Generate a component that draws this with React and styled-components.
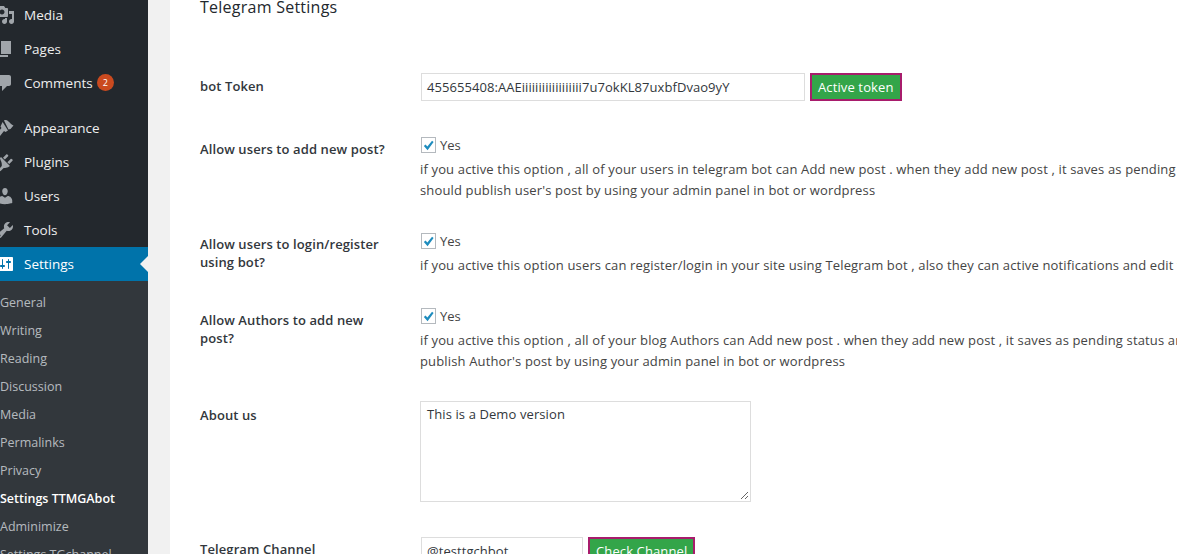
import styled, { createGlobalStyle } from 'styled-components';

const GlobalStyle = createGlobalStyle`
  html, body {
    margin: 0;
    padding: 0;
    height: 554px;
    overflow: hidden;
    background: #fff;
  }
  body {
    font-family: "Open Sans", "Noto Sans", sans-serif;
    font-size: 13px;
    color: #444;
  }
`;

const Page = styled.div`
  display: flex;
  width: 1177px;
  height: 554px;
  overflow: hidden;
`;

const Sidebar = styled.nav`
  width: 148px;
  flex-shrink: 0;
  background: #23282d;
  display: flex;
  flex-direction: column;
`;

const MenuGroup = styled.div`
  display: flex;
  flex-direction: column;
  margin-top: ${p => p.$offset || 0}px;
  margin-bottom: ${p => p.$gap || 0}px;
`;

const MenuItem = styled.div`
  position: relative;
  box-sizing: border-box;
  display: flex;
  align-items: center;
  height: 34px;
  padding-bottom: 1px;
  gap: 9px;
  color: ${p => (p.$active ? '#fff' : '#eee')};
  background: ${p => (p.$active ? '#0073aa' : 'transparent')};
  font-size: 13.5px;
`;

const IconSlot = styled.svg`
  width: 20px;
  height: 20px;
  margin-left: -5px;
  fill: ${p => (p.$active ? '#fff' : '#a0a5aa')};
  flex-shrink: 0;
`;

const Arrow = styled.span`
  position: absolute;
  right: 0;
  top: 9px;
  border: 8px solid transparent;
  border-right-color: #f1f1f1;
  border-left-width: 0;
`;

const Badge = styled.span`
  display: inline-flex;
  align-items: center;
  justify-content: center;
  width: 17px;
  height: 17px;
  margin-left: -5px;
  border-radius: 50%;
  background: #ca4a1f;
  color: #fff;
  font-size: 9px;
`;

const Submenu = styled.div`
  background: #32373c;
  flex: 1;
  padding-top: 8px;
  display: flex;
  flex-direction: column;
`;

const SubItem = styled.div`
  height: 28px;
  line-height: 28px;
  font-size: 12.5px;
  white-space: nowrap;
  color: ${p => (p.$current ? '#fff' : 'rgba(240,245,250,.7)')};
  font-weight: ${p => (p.$current ? 600 : 400)};
`;

const Content = styled.main`
  flex: 1;
  min-width: 0;
  display: flex;
  background: #f1f1f1;
  padding-left: 22px;
`;

const Card = styled.section`
  flex: 1;
  min-width: 0;
  background: #fff;
  padding: 0 0 0 30px;
  overflow: hidden;
`;

const Heading = styled.h2`
  margin: -6px 0 29px;
  height: 50px;
  font-size: 16px;
  line-height: 26px;
  font-weight: 500;
  letter-spacing: .25px;
  color: #23282d;
`;

const Row = styled.div`
  display: grid;
  grid-template-columns: 220px max-content;
  min-height: ${p => p.$height}px;
  align-items: start;
`;

const Label = styled.label`
  font-size: 13px;
  line-height: 18px;
  font-weight: 600;
  letter-spacing: .1px;
  color: #32373c;
  width: 190px;
  padding-top: ${p => p.$top || 0}px;
`;

const Field = styled.div`
  display: flex;
  flex-direction: column;
`;

const InlineField = styled.div`
  display: flex;
  align-items: stretch;
  gap: 5px;
  margin-left: 1px;
`;

const TextBox = styled.div`
  box-sizing: border-box;
  width: ${p => p.$width}px;
  height: 28px;
  padding: 0 5px;
  border: 1px solid #ddd;
  background: #fff;
  color: #32373c;
  line-height: 26px;
  letter-spacing: .06px;
  white-space: nowrap;
  overflow: hidden;
`;

const GreenButton = styled.button`
  box-sizing: border-box;
  height: 28px;
  padding: 0 6px;
  border: 2px solid #a81c6c;
  background: #33a549;
  color: #fff;
  font: inherit;
  letter-spacing: .12px;
  line-height: 22px;
  white-space: nowrap;
`;

const CheckRow = styled.div`
  display: flex;
  align-items: center;
  gap: 4px;
  height: 22px;
  line-height: 18px;
`;

const CheckBox = styled.span`
  box-sizing: border-box;
  display: flex;
  align-items: center;
  justify-content: center;
  width: 15px;
  height: 16px;
  margin-left: 1px;
  border: 1px solid #b4b9be;
  background: #fff;
`;

const Hint = styled.p`
  margin: 3px 0 0;
  font-size: 13px;
  line-height: 21px;
  letter-spacing: .15px;
  color: #444;
  white-space: nowrap;
`;

const TextArea = styled.div`
  position: relative;
  box-sizing: border-box;
  width: 331px;
  height: 101px;
  padding: 2px 6px;
  border: 1px solid #ddd;
  background: #fff;
  color: #32373c;
  letter-spacing: .1px;
  line-height: 20px;
`;

const Grip = styled.svg`
  position: absolute;
  right: 1px;
  bottom: 1px;
  width: 9px;
  height: 9px;
  stroke: #666;
  stroke-width: 1;
`;

const icons = {
  media: 'M13 11V4c0-.55-.45-1-1-1h-1.670L9 1H5L3.670 3H2c-.55 0-1 .45-1 1v7c0 .55.45 1 1 1h10c.55 0 1-.45 1-1zM7 4.500c1.380 0 2.500 1.120 2.500 2.500S8.380 9.500 7 9.500 4.500 8.380 4.500 7 5.620 4.500 7 4.500zM14 6h5v10.500c0 1.380-1.120 2.500-2.500 2.500S14 17.880 14 16.500s1.120-2.500 2.500-2.500c.17 0 .34.020.5.050V9h-3V6zm-4 8.050V13h2v3.500c0 1.380-1.120 2.500-2.500 2.500S7 17.880 7 16.500 8.120 14 9.500 14c.17 0 .34.020.5.050z',
  pages: 'M6 15V2h10v13H6zm-1 1h8v2H3V5h2v11z',
  comments: 'M5 2h9c1.100 0 2 .9 2 2v7c0 1.100-.9 2-2 2h-2l-5 5v-5H5c-1.100 0-2-.9-2-2V4c0-1.100.9-2 2-2z',
  appearance: 'M9 2.500c1.500-.8 3-.3 4.500 1 1.500 1.200 3 3.200 5 4l-3 3.500-2 .5zM7.600 4l5.400 8.500-2.500 1.500-1.500-1-4.500 5.500c-.8.8-2 .8-2.700 0-.8-.8-.8-1.900 0-2.700L6.500 10l-1-1.500z',
  plugins: 'M13.110 4.360L9.870 7.600 8 5.730l3.240-3.240c.35-.34 1.050-.2 1.560.32.520.51.660 1.210.310 1.550zM17.500 8.800l-3.240 3.240-1.870-1.870 3.240-3.240c.35-.34 1.050-.2 1.560.32.520.51.660 1.210.310 1.550zM6 5l9 9-1.200.84c-.7.7-2.600 1.160-3.700 1.160H8.700l-2.800 2.800c-.5.5-1.500.6-2 .1-.5-.5-.4-1.500.1-2l2.800-2.800v-1.800c0-1-.4-2.500-1-3.500L4.900 6.100z',
  users: 'M10 9.250c-2.270 0-2.730-3.440-2.730-3.440C7 4.020 7.820 2 9.970 2c2.160 0 2.980 2.020 2.710 3.810 0 0-.41 3.440-2.680 3.440zm0 2.570L12.720 10c2.390 0 4.520 2.330 4.520 4.530v2.490s-3.650 1.130-7.240 1.130c-3.650 0-7.240-1.130-7.240-1.130v-2.490c0-2.250 1.940-4.480 4.470-4.480z',
  tools: 'M16.680 9.770c-1.340 1.340-3.300 1.670-4.950.99l-5.410 6.520c-.99.99-2.590.99-3.580 0s-.99-2.590 0-3.570l6.520-5.420c-.68-1.650-.35-3.610.99-4.950 1.280-1.280 3.120-1.620 4.720-1.060l-2.890 2.890 2.820 2.820 2.860-2.870c.53 1.580.18 3.420-1.080 4.650zM3.810 16.210c.4.390 1.040.39 1.430 0 .4-.4.4-1.040 0-1.430-.39-.4-1.030-.4-1.430 0-.39.39-.39 1.030 0 1.430z',
  settings: 'M18 16V4c0-.55-.45-1-1-1H3c-.55 0-1 .45-1 1v12c0 .55.45 1 1 1h14c.55 0 1-.45 1-1zM8 11h1c.55 0 1 .45 1 1s-.45 1-1 1H8v1.500c0 .28-.22.5-.5.5s-.5-.22-.5-.5V13H6c-.55 0-1-.45-1-1s.45-1 1-1h1V5.500c0-.28.22-.5.5-.5s.5.22.5.5V11zm5-2h-1c-.55 0-1-.45-1-1s.45-1 1-1h1V5.500c0-.28.22-.5.5-.5s.5.22.5.5V7h1c.55 0 1 .45 1 1s-.45 1-1 1h-1v5.500c0 .28-.22.5-.5.5s-.5-.22-.5-.5V9z',
};

const Icon = ({ name, active }) => (
  <IconSlot viewBox="0 0 20 20" $active={active}>
    <path fillRule="evenodd" d={icons[name]} />
  </IconSlot>
);

const Check = () => (
  <svg width="13" height="13" viewBox="0 0 14 14">
    <path d="M2 7.500l1.800-1.700 2 2.200L10.800 2 12.500 3.300 6 12z" fill="#1e8cbe" />
  </svg>
);

const subItems = ['General', 'Writing', 'Reading', 'Discussion', 'Media', 'Permalinks', 'Privacy', 'Settings TTMGAbot', 'Adminimize', 'Settings TGchannel'];

const Yes = () => (
  <CheckRow>
    <CheckBox><Check /></CheckBox>
    Yes
  </CheckRow>
);

export default function App() {
  return (
    <Page>
      <GlobalStyle />
      <Sidebar>
        <MenuGroup $offset={-2}>
          <MenuItem><Icon name="media" />Media</MenuItem>
          <MenuItem><Icon name="pages" />Pages</MenuItem>
        </MenuGroup>
        <MenuGroup $gap={11}>
          <MenuItem><Icon name="comments" />Comments <Badge>2</Badge></MenuItem>
        </MenuGroup>
        <MenuGroup>
          <MenuItem><Icon name="appearance" />Appearance</MenuItem>
          <MenuItem><Icon name="plugins" />Plugins</MenuItem>
          <MenuItem><Icon name="users" />Users</MenuItem>
          <MenuItem><Icon name="tools" />Tools</MenuItem>
          <MenuItem $active><Icon name="settings" active />Settings<Arrow /></MenuItem>
        </MenuGroup>
        <Submenu>
          {subItems.map(item => (
            <SubItem key={item} $current={item === 'Settings TTMGAbot'}>{item}</SubItem>
          ))}
        </Submenu>
      </Sidebar>
      <Content>
        <Card>
          <Heading>Telegram Settings</Heading>
          <Row $height={61}>
            <Label $top={4}>bot Token</Label>
            <InlineField>
              <TextBox $width={384}>455655408:AAEiiiiiiiiiiiiiiiiii7u7okKL87uxbfDvao9yY</TextBox>
              <GreenButton>Active token</GreenButton>
            </InlineField>
          </Row>
          <Row $height={96}>
            <Label $top={6}>Allow users to add new post?</Label>
            <Field>
              <Yes />
              <Hint>
                if you active this option , all of your users in telegram bot can Add new post . when they add new post , it saves as pending status and you<br />
                should publish user's post by using your admin panel in bot or wordpress
              </Hint>
            </Field>
          </Row>
          <Row $height={75}>
            <Label $top={5}>Allow users to login/register using bot?</Label>
            <Field>
              <Yes />
              <Hint>if you active this option users can register/login in your site using Telegram bot , also they can active notifications and edit their profile</Hint>
            </Field>
          </Row>
          <Row $height={96}>
            <Label $top={6}>Allow Authors to add new post?</Label>
            <Field>
              <Yes />
              <Hint>
                if you active this option , all of your blog Authors can Add new post . when they add new post , it saves as pending status and you should<br />
                publish Author's post by using your admin panel in bot or wordpress
              </Hint>
            </Field>
          </Row>
          <Row $height={136}>
            <Label $top={5}>About us</Label>
            <TextArea>
              This is a Demo version
              <Grip viewBox="0 0 9 9"><path d="M8 1L1 8M8 5L5 8" /></Grip>
            </TextArea>
          </Row>
          <Row $height={30}>
            <Label $top={3}>Telegram Channel</Label>
            <InlineField>
              <TextBox $width={162}>@testtgchbot</TextBox>
              <GreenButton>Check Channel</GreenButton>
            </InlineField>
          </Row>
        </Card>
      </Content>
    </Page>
  );
}
